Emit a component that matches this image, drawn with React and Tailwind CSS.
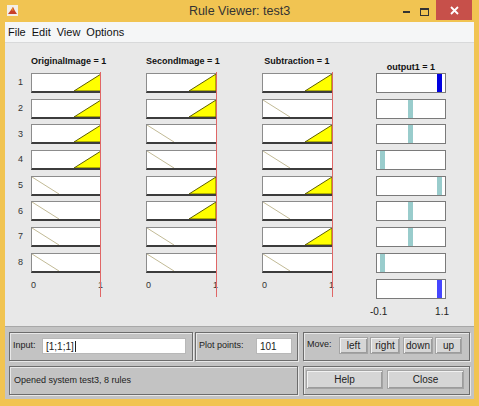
import React from "react";

const inputs = [
  { name: "OriginalImage = 1", rules: [1, 1, 1, 1, 0, 0, 0, 0], ml: "ml-0", line: "left-[69px]" },
  { name: "SecondImage = 1", rules: [1, 1, 0, 0, 1, 1, 0, 0], ml: "ml-[45px]", line: "left-[70px]" },
  { name: "Subtraction = 1", rules: [1, 0, 1, 0, 1, 0, 1, 0], ml: "ml-[46px]", line: "left-[70px]" },
];

const outputs = [
  { pos: "left-[60px]", color: "bg-[#0000e0]" },
  { pos: "left-[31px]", color: "bg-[#99cccc]" },
  { pos: "left-[31px]", color: "bg-[#99cccc]" },
  { pos: "left-[3px]", color: "bg-[#99cccc]" },
  { pos: "left-[60px]", color: "bg-[#99cccc]" },
  { pos: "left-[31px]", color: "bg-[#99cccc]" },
  { pos: "left-[31px]", color: "bg-[#99cccc]" },
  { pos: "left-[3px]", color: "bg-[#99cccc]" },
  { pos: "left-[60px]", color: "bg-[#4646ff]" },
];

const MfBox = ({ on }) => (
  <div className="h-[20px] w-[70px] bg-white border-t border-l border-[#8c8c8c] border-b-2 border-b-[#3c3c3c]">
    <svg viewBox="0 0 69 17" preserveAspectRatio="none" className="block w-full h-full">
      {on ? (
        <polygon
          points="42,17 69,0 69,17"
          fill="#ffff00"
          stroke="#5e5e00"
          strokeWidth="1"
          vectorEffect="non-scaling-stroke"
        />
      ) : (
        <line
          x1="0"
          y1="0"
          x2="27"
          y2="17"
          stroke="#c2ba96"
          strokeWidth="1"
          vectorEffect="non-scaling-stroke"
        />
      )}
    </svg>
  </div>
);

const Button = ({ label, className }) => (
  <div
    className={
      "flex items-center justify-center bg-[#d6d6d6] border border-[#a4a4a4] shadow-[inset_1px_1px_0_#f2f2f2,inset_-1px_-1px_0_#9c9c9c] text-[10px] text-[#222] " +
      className
    }
  >
    {label}
  </div>
);

const Panel = ({ className, children }) => (
  <div
    className={
      "border border-[#6c6c6c] shadow-[inset_1px_1px_0_#e8e8e8,1px_1px_0_#e8e8e8] " + className
    }
  >
    {children}
  </div>
);

export default function App() {
  return (
    <div className="w-[479px] h-[406px] bg-[#f1c452] overflow-hidden flex flex-col font-['Liberation_Sans',Arial,sans-serif]">
      {/* title bar */}
      <div className="h-[22px] flex items-start">
        <div className="w-[120px] pl-[7px] pt-[5px]">
          <svg width="11" height="11" viewBox="0 0 11 11">
            <rect x="0" y="0" width="11" height="11" fill="#f4efe6" />
            <path d="M1 9 L4 5 L6 2 L8 6 L10 9 Z" fill="#c8402a" />
            <path d="M4 5 L6 2 L6.5 6 Z" fill="#e88a2a" />
          </svg>
        </div>
        <div className="flex-1 text-center text-[12.5px] text-[#333] pt-[4px] leading-[14px]">
          Rule Viewer: test3
        </div>
        <div className="w-[120px] flex items-start justify-end pr-[7px]">
          <div className="mt-[11px] w-[7px] h-[2px] bg-[#333] mr-[10px]" />
          <div className="mt-[8px] w-[9px] h-[8px] border border-[#333] border-t-2 mr-[7px]" />
          <div className="w-[36px] h-[20px] bg-[#c7504a] flex items-center justify-center">
            <svg width="9" height="9" viewBox="0 0 9 9">
              <path d="M1 1 L8 8 M8 1 L1 8" stroke="#fff" strokeWidth="1.8" />
            </svg>
          </div>
        </div>
      </div>

      {/* window body */}
      <div className="mx-[5px] flex flex-col">
        <div className="h-[21px] bg-[#f5f6f7] border-b border-[#d8d9da] flex items-center gap-[6px] pl-[3px] text-[11px] text-[#111]">
          <span>File</span>
          <span>Edit</span>
          <span>View</span>
          <span>Options</span>
        </div>

        {/* plots */}
        <div className="h-[283px] bg-[#e8e8e8] flex pt-[12px]">
          <div className="w-[26px] pl-[13px] pt-[18px] flex flex-col gap-[5.7px] text-[9px] text-[#333]">
            {[1, 2, 3, 4, 5, 6, 7, 8].map((n) => (
              <div key={n} className="h-[20px] flex items-center">
                {n}
              </div>
            ))}
          </div>

          {inputs.map((col) => (
            <div key={col.name} className={"relative w-[70px] shrink-0 flex flex-col " + col.ml}>
              <div className="h-[18px] text-center text-[9px] font-bold leading-[12px] text-[#111] whitespace-nowrap">
                {col.name}
              </div>
              <div className="flex flex-col gap-[5.7px]">
                {col.rules.map((r, i) => (
                  <MfBox key={i} on={r === 1} />
                ))}
              </div>
              <div className="flex justify-between mt-[7px] text-[9px] leading-[10px] text-[#333]">
                <span>0</span>
                <span className="mr-[-2px]">1</span>
              </div>
              <div className={"absolute z-10 top-[17px] w-px h-[225px] bg-[#e06666] " + col.line} />
            </div>
          ))}

          <div className="ml-[44px] w-[70px] shrink-0 flex flex-col">
            <div className="h-[18px] pt-[6px] text-center text-[9px] font-bold leading-[12px] text-[#111] whitespace-nowrap">
              output1 = 1
            </div>
            <div className="flex flex-col gap-[5.7px]">
              {outputs.map((o, i) => (
                <div key={i} className="relative h-[20px] w-[70px] bg-white border border-[#7a7a7a]">
                  <div className={"absolute top-0 bottom-0 w-[5px] " + o.pos + " " + o.color} />
                </div>
              ))}
            </div>
            <div className="flex justify-between mt-[8px] text-[10px] leading-[10px] text-[#222]">
              <span className="ml-[-6px]">-0.1</span>
              <span className="mr-[-3px]">1.1</span>
            </div>
          </div>
        </div>

        {/* bottom controls */}
        <div className="h-[73px] bg-[#c3c3c3] border-t border-[#a8a8a8] pl-[4px] pt-[5px] flex flex-col gap-[5px]">
          <div className="flex">
            <Panel className="w-[184px] h-[29px] flex items-start pt-[5px]">
              <span className="pl-[3px] text-[9px] text-[#222] mt-[1px]">Input:</span>
              <div className="ml-auto mr-[6px] w-[144px] h-[16px] bg-white border border-[#b8b8b8] flex items-center pl-[3px] text-[10px] text-[#222]">
                [1;1;1]
                <span className="w-px h-[11px] bg-[#222] ml-px" />
              </div>
            </Panel>
            <Panel className="ml-[2px] w-[103px] h-[29px] flex items-start pt-[5px]">
              <span className="pl-[3px] text-[9px] text-[#222] mt-[1px]">Plot points:</span>
              <div className="ml-auto mr-[5px] w-[36px] h-[16px] bg-white border border-[#b8b8b8] flex items-center pl-[3px] text-[10px] text-[#222]">
                101
              </div>
            </Panel>
            <Panel className="ml-[5px] w-[167px] h-[29px] flex items-start pt-[4px]">
              <span className="pl-[3px] text-[9px] text-[#222] mt-[1px] w-[35px]">Move:</span>
              <Button label="left" className="w-[29px] h-[17px]" />
              <Button label="right" className="ml-[2px] w-[30px] h-[17px]" />
              <Button label="down" className="ml-[3px] w-[30px] h-[17px]" />
              <Button label="up" className="ml-[2px] w-[27px] h-[17px]" />
            </Panel>
          </div>
          <div className="flex">
            <Panel className="w-[289px] h-[29px] pl-[4px] pt-[7px] text-[9px] text-[#222]">
              Opened system test3, 8 rules
            </Panel>
            <Panel className="ml-[5px] w-[167px] h-[29px] flex items-start pt-[3px] pl-[2px]">
              <Button label="Help" className="w-[77px] h-[19px]" />
              <Button label="Close" className="ml-[4px] w-[77px] h-[19px]" />
            </Panel>
          </div>
        </div>
      </div>
    </div>
  );
}
